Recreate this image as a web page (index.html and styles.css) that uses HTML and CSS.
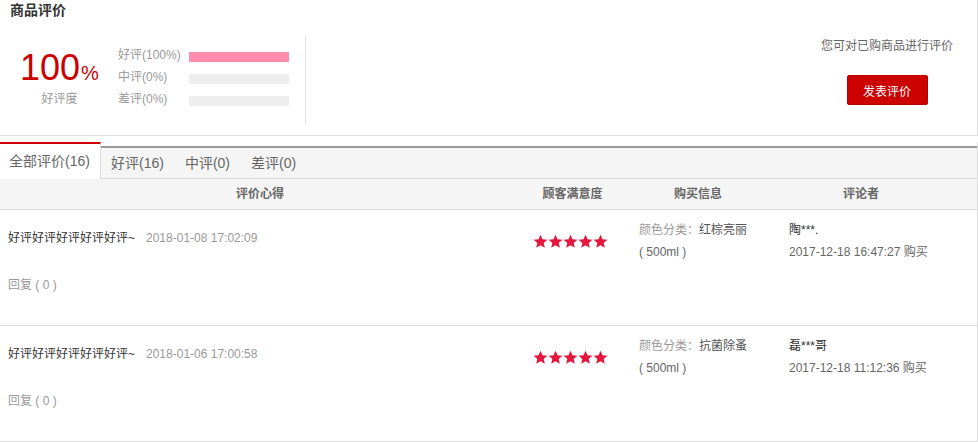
FILE: index.html
```html
<!DOCTYPE html>
<html lang="zh-CN">
<head>
<meta charset="utf-8">
<title>商品评价</title>
<link rel="stylesheet" href="styles.css">
</head>
<body>
<svg width="0" height="0" class="defs">
  <defs>
    <symbol id="star" viewBox="0 0 24 24">
      <path d="M12 1l3.2 7.3 7.9.7-6 5.2 1.8 7.8L12 18l-6.9 4 1.8-7.8-6-5.2 7.9-.7z"/>
    </symbol>
  </defs>
</svg>
<div class="page">
  <section class="summary">
    <h2 class="title">商品评价</h2>
    <div class="summary-body">
      <div class="rate">
        <div class="rate-num">100<span class="pct">%</span></div>
        <div class="rate-label">好评度</div>
      </div>
      <div class="bars">
        <div class="bar-row"><span class="bar-label">好评(100%)</span><span class="bar"><span class="bar-fill" style="width:100%"></span></span></div>
        <div class="bar-row"><span class="bar-label">中评(0%)</span><span class="bar"><span class="bar-fill" style="width:0%"></span></span></div>
        <div class="bar-row"><span class="bar-label">差评(0%)</span><span class="bar"><span class="bar-fill" style="width:0%"></span></span></div>
      </div>
      <div class="divider"></div>
      <div class="spacer"></div>
      <div class="write">
        <p class="write-tip">您可对已购商品进行评价</p>
        <button class="write-btn">发表评价</button>
      </div>
    </div>
  </section>

  <section class="list">
    <div class="tabs">
      <div class="tab active">全部评价(16)</div>
      <div class="tab-rest">
        <div class="tab">好评(16)</div>
        <div class="tab">中评(0)</div>
        <div class="tab">差评(0)</div>
      </div>
    </div>
    <div class="grid head">
      <div>评价心得</div>
      <div>顾客满意度</div>
      <div>购买信息</div>
      <div>评论者</div>
      <div></div>
    </div>

    <div class="grid item">
      <div class="c-text">
        <p class="comment">好评好评好评好评好评~<span class="date">2018-01-08 17:02:09</span></p>
        <p class="reply">回复 ( 0 )</p>
      </div>
      <div class="c-stars">
        <svg class="star"><use href="#star"/></svg><svg class="star"><use href="#star"/></svg><svg class="star"><use href="#star"/></svg><svg class="star"><use href="#star"/></svg><svg class="star"><use href="#star"/></svg>
      </div>
      <div class="c-info">
        <p><span class="muted">颜色分类：</span>红棕亮丽</p>
        <p class="sub">( 500ml )</p>
      </div>
      <div class="c-user">
        <p class="name">陶***.</p>
        <p class="sub">2017-12-18 16:47:27 购买</p>
      </div>
      <div></div>
    </div>

    <div class="grid item">
      <div class="c-text">
        <p class="comment">好评好评好评好评好评~<span class="date">2018-01-06 17:00:58</span></p>
        <p class="reply">回复 ( 0 )</p>
      </div>
      <div class="c-stars">
        <svg class="star"><use href="#star"/></svg><svg class="star"><use href="#star"/></svg><svg class="star"><use href="#star"/></svg><svg class="star"><use href="#star"/></svg><svg class="star"><use href="#star"/></svg>
      </div>
      <div class="c-info">
        <p><span class="muted">颜色分类：</span>抗菌除蚤</p>
        <p class="sub">( 500ml )</p>
      </div>
      <div class="c-user">
        <p class="name">磊***哥</p>
        <p class="sub">2017-12-18 11:12:36 购买</p>
      </div>
      <div></div>
    </div>
  </section>
</div>
</body>
</html>
```

FILE: styles.css
```css
* { box-sizing: border-box; }
html, body { margin: 0; padding: 0; background: #fff; }
body {
  font-family: "Liberation Sans", "Noto Sans CJK SC", sans-serif;
  font-size: 12px;
  color: #333;
}
p { margin: 0; }
.defs { position: absolute; width: 0; height: 0; overflow: hidden; }

.page { width: 978px; }

.summary {
  height: 136px;
  border-right: 1px solid #ddd;
  border-bottom: 1px solid #ddd;
}
.title {
  margin: 0;
  padding-left: 10px;
  font-size: 14px;
  font-weight: bold;
  line-height: 20px;
  color: #333;
}
.summary-body {
  display: flex;
  margin-top: 15px;
  height: 90px;
}
.rate {
  width: 118px;
  padding-top: 14px;
  padding-left: 20px;
}
.rate-num {
  color: #c00;
  font-size: 36px;
  line-height: 38px;
  white-space: nowrap;
}
.pct { font-size: 20px; margin-left: 1px; }
.rate-label {
  width: 77px;
  text-align: center;
  color: #999;
  font-size: 12px;
  line-height: 16px;
  margin-top: -1px;
  padding-left: 2px;
}
.bars {
  display: flex;
  flex-direction: column;
  gap: 6px;
  padding-top: 13px;
}
.bar-row {
  display: flex;
  align-items: center;
  height: 16px;
}
.bar-label {
  width: 71px;
  color: #999;
  line-height: 16px;
  position: relative;
  top: -1px;
}
.bar {
  display: block;
  width: 100px;
  height: 10px;
  background: #eee;
  position: relative;
  top: 1px;
}
.bar-fill { display: block; height: 100%; background: #ff8cac; }
.divider {
  width: 1px;
  background: #e5e5e5;
  margin-left: 16px;
}
.spacer { flex: 1; }
.write {
  width: 132px;
  margin-right: 24px;
  margin-top: 1px;
  display: flex;
  flex-direction: column;
  align-items: center;
}
.write-tip {
  color: #666;
  line-height: 20px;
  white-space: nowrap;
}
.write-btn {
  margin-top: 19px;
  width: 81px;
  height: 30px;
  background: #c00;
  border: 1px solid #b00;
  border-radius: 2px;
  color: #fff;
  font-family: inherit;
  font-size: 12px;
  padding: 0;
  cursor: pointer;
}

.list { border-right: 1px solid #ddd; margin-top: 6px; }
.tabs { display: flex; height: 37px; }
.tab {
  padding: 0 10px;
  font-size: 14px;
  color: #666;
  line-height: 30px;
  white-space: nowrap;
}
.tab.active {
  width: 101px;
  padding-left: 9px;
  border-top: 2px solid #c00;
  border-right: 1px solid #ddd;
  background: #fff;
  line-height: 34px;
}
.tab-rest {
  flex: 1;
  display: flex;
  margin-top: 4px;
  border-top: 2px solid #999;
  border-bottom: 1px solid #ddd;
  background: #f5f5f5;
}
.tab-rest .tab + .tab { margin-left: 1px; }

.grid {
  display: grid;
  grid-template-columns: 520px 105px 146px 180px 1fr;
}
.head {
  background: #f5f5f5;
  height: 31px;
  border-bottom: 1px solid #ddd;
  font-weight: bold;
  color: #666;
  line-height: 30px;
  text-align: center;
}
.item {
  height: 116px;
  border-bottom: 1px solid #ddd;
}
.c-text { padding: 18px 0 0 8px; }
.comment { line-height: 20px; color: #333; }
.date { color: #999; margin-left: 11px; }
.reply { margin-top: 27px; line-height: 20px; color: #999; }
.c-stars {
  display: flex;
  justify-content: center;
  gap: 0;
  padding-top: 24px;
  padding-right: 4px;
}
.star { width: 15px; height: 15px; fill: #e4173e; }
.c-info { padding: 9px 0 0 14px; line-height: 22px; color: #555; }
.muted { color: #999; }
.c-info .sub { color: #666; }
.c-user { padding: 9px 0 0 18px; line-height: 22px; }
.name { color: #333; }
.c-user .sub { color: #666; }
```
